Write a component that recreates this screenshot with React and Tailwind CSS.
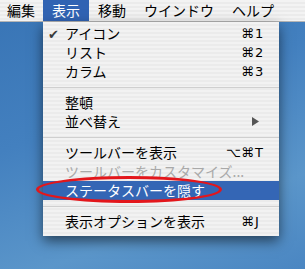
const JP = "font-['Noto_Sans_CJK_JP','Noto_Sans',sans-serif]";

const MENU_BAR = [
  { label: "編集", cls: "pl-[7px] pr-[8px]" },
  { label: "表示", cls: "px-[9px] bg-[#3163b3] text-white" },
  { label: "移動", cls: "px-[9px]" },
  { label: "ウインドウ", cls: "px-[9px]" },
  { label: "ヘルプ", cls: "px-[9px]" },
];

function Shortcut({ mod, keyName }) {
  return (
    <div className="ml-auto flex items-center font-['DejaVu_Sans',sans-serif] text-[13px] text-black">
      <span className="w-[40px] text-right">{mod}</span>
      <span className="ml-[1px] w-[14px]">{keyName}</span>
    </div>
  );
}

function Item({ label, shortcut, checked, disabled, selected, submenu }) {
  return (
    <div
      className={`relative flex h-[19px] items-center pl-[22px] pr-[10px] ${
        selected ? "bg-[#3466b5] text-white" : disabled ? "text-[#a9a9a9]" : "text-black"
      }`}
    >
      {checked && (
        <span className="absolute left-[5px] top-[1px] font-['DejaVu_Sans',sans-serif] text-[13px] text-[#3a3a3a]">
          ✔
        </span>
      )}
      <span className="whitespace-nowrap">{label}</span>
      {shortcut && <Shortcut mod={shortcut[0]} keyName={shortcut[1]} />}
      {submenu && (
        <svg className="ml-auto mr-[10px]" width="7" height="9" viewBox="0 0 7 9">
          <path d="M0 0 L7 4.5 L0 9 Z" fill="#555" />
        </svg>
      )}
    </div>
  );
}

function Separator() {
  return (
    <div className="flex h-[12px] items-center">
      <div className="h-px w-full bg-[#cfcfcf]" />
    </div>
  );
}

export default function App() {
  return (
    <div
      className={`relative h-[269px] w-[305px] overflow-hidden bg-[linear-gradient(160deg,#3874b5_0%,#4380bf_40%,#5b96ca_75%,#4a86c2_100%)] ${JP} text-[14px]`}
    >
      {/* menu bar */}
      <div className="flex h-[22px] items-stretch border-b border-[#b5b5b5] bg-[repeating-linear-gradient(to_bottom,#f3f3f3_0px,#f3f3f3_2px,#ebebeb_2px,#ebebeb_4px)] leading-[21px] text-black">
        {MENU_BAR.map((m) => (
          <div key={m.label} className={`whitespace-nowrap ${m.cls}`}>
            {m.label}
          </div>
        ))}
      </div>

      {/* dropdown */}
      <div className="absolute left-[43px] top-[22px] w-[236px] bg-[repeating-linear-gradient(to_bottom,#f2f2f2_0px,#f2f2f2_2px,#ebebeb_2px,#ebebeb_4px)] pb-[5px] pt-[2px] leading-[19px] shadow-[0_5px_12px_rgba(0,0,0,0.55)]">
        <Item label="アイコン" checked shortcut={["⌘", "1"]} />
        <Item label="リスト" shortcut={["⌘", "2"]} />
        <Item label="カラム" shortcut={["⌘", "3"]} />
        <Separator />
        <Item label="整頓" />
        <Item label="並べ替え" submenu />
        <Separator />
        <Item label="ツールバーを表示" shortcut={["⌥⌘", "T"]} />
        <Item label="ツールバーをカスタマイズ..." disabled />
        <Item label="ステータスバーを隠す" selected />
        <Separator />
        <Item label="表示オプションを表示" shortcut={["⌘", "J"]} />
      </div>

      {/* red annotation ellipse */}
      <div className="absolute left-[36px] top-[176px] h-[27px] w-[186px] rounded-[50%] border-[3px] border-[#e3161b]" />
    </div>
  );
}
